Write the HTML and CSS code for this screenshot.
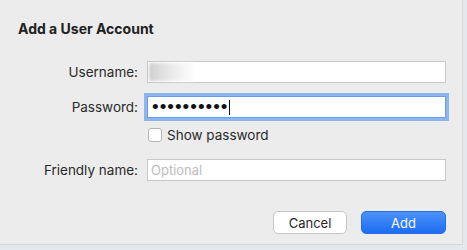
FILE: index.html
```html
<!DOCTYPE html>
<html lang="en">
<head>
    <meta charset="UTF-8"/>
    <title>Add a User Account</title>
    <link rel="stylesheet" href="styles.css">
</head>
<body>
<div class="sheet">
    <h1>Add a User Account</h1>

    <!-- ========== ACCOUNT FORM ========== -->
    <div class="form">
        <div class="row row-user">
            <span class="label">Username:</span>
            <div class="field"><span class="redacted"></span></div>
        </div>
        <div class="row row-pass">
            <span class="label">Password:</span>
            <div class="field focused"><span class="dots">••••••••••</span><span class="caret"></span></div>
        </div>
        <div class="row row-check">
            <span class="label"></span>
            <label class="check"><span class="box"></span>Show password</label>
        </div>
        <div class="row row-friendly">
            <span class="label">Friendly name:</span>
            <div class="field"><span class="placeholder">Optional</span></div>
        </div>
    </div>

    <!-- ========== BUTTONS ========== -->
    <div class="actions">
        <button class="btn">Cancel</button>
        <button class="btn primary">Add</button>
    </div>
</div>
</body>
</html>
```

FILE: styles.css
```css
/* ========== GLOBAL ========== */
body {
  margin: 0;
  background-color: #e4e7eb;
  font-family: Inter, "Liberation Sans", sans-serif;
  font-size: 13px;
  color: #262626;
}

.sheet {
  width: 463px;
  height: 245px;
  box-sizing: border-box;
  background-color: #ececec;
  border-right: 1px solid #dadada;
  border-bottom: 1px solid #d4d6d9;
  padding: 20px 16px 0 18px;
}

h1 {
  margin: 0;
  font-size: 14px;
  line-height: 17px;
  font-weight: bold;
  color: #222;
}

/* ========== FORM ROWS ========== */
.form {
  display: flex;
  flex-direction: column;
  margin-top: 24px;
}

.row {
  display: flex;
  align-items: center;
  gap: 9px;
}
.row-pass { margin-top: 13px; }
.row-check { margin-top: 9px; }
.row-friendly { margin-top: 16px; }

.label {
  width: 120px;
  text-align: right;
  flex: none;
  font-size: 13.5px;
  color: #2a2a2a;
}

.field {
  width: 300px;
  height: 22px;
  box-sizing: border-box;
  background-color: #fff;
  border: 1px solid #c9c9c9;
  display: flex;
  align-items: center;
  padding: 0 3px;
}

.field.focused {
  border-color: #6a9ce8;
  box-shadow: 0 0 0 3px #8db5ee;
}

.redacted {
  display: inline-block;
  width: 46px;
  height: 18px;
  margin-left: -2px;
  background: linear-gradient(to right, #cfcfcf, #e8e8e8 45%, #fff);
  filter: blur(1.5px);
}

.dots {
  font-family: "Liberation Sans", sans-serif;
  font-size: 19px;
  line-height: 18px;
  letter-spacing: 1px;
  color: #111;
  margin-left: 1px;
}

.caret {
  display: inline-block;
  width: 1px;
  height: 15px;
  background-color: #111;
}

.placeholder {
  color: #bdbdbd;
}

.check {
  display: flex;
  align-items: center;
  gap: 5px;
  margin-left: 1px;
  font-size: 13.5px;
  color: #2a2a2a;
}
.check .box {
  width: 14px;
  height: 14px;
  box-sizing: border-box;
  background-color: #fff;
  border: 1px solid #b4b4b4;
  border-radius: 3px;
}

/* ========== BUTTONS ========== */
.actions {
  display: flex;
  justify-content: flex-end;
  gap: 14px;
  margin-top: 30px;
}

.btn {
  height: 23px;
  width: 74px;
  font-family: inherit;
  font-size: 13px;
  color: #262626;
  background-color: #fff;
  border: 1px solid #c6c6c6;
  border-radius: 5px;
  padding: 0;
}

.btn.primary {
  width: 85px;
  color: #fff;
  border-color: #2a6fe0;
  background: linear-gradient(#4b93fa, #1d6cf2);
}
```
